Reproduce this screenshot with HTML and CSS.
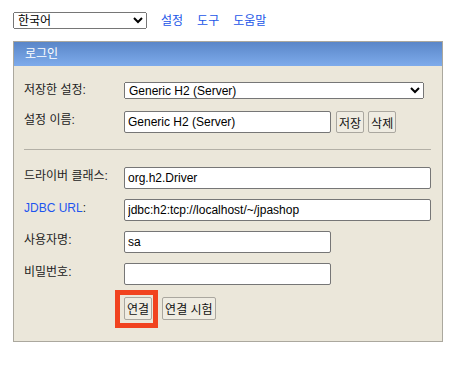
FILE: index.html
```html
<!DOCTYPE html>
<html lang="ko">
<head>
    <meta charset="UTF-8" />
    <title>H2 Console</title>
    <link rel="stylesheet" href="styles.css">
</head>
<body>
<div class="toolbar">
    <select class="lang">
        <option>한국어</option>
    </select>
    <a href="#" class="nav-link">설정</a>
    <a href="#" class="nav-link">도구</a>
    <a href="#" class="nav-link">도움말</a>
</div>

<div class="login">
    <div class="login-head">로그인</div>
    <div class="login-body">
        <!-- saved settings -->
        <div class="form-grid">
            <div class="label first">저장한 설정:</div>
            <div class="field">
                <select class="saved">
                    <option>Generic H2 (Server)</option>
                </select>
            </div>
            <div class="label">설정 이름:</div>
            <div class="field">
                <input class="short" type="text" value="Generic H2 (Server)">
                <button class="btn">저장</button>
                <button class="btn">삭제</button>
            </div>
        </div>

        <hr class="sep">

        <!-- connection -->
        <div class="form-grid">
            <div class="label">드라이버 클래스:</div>
            <div class="field"><input class="wide" type="text" value="org.h2.Driver"></div>
            <div class="label"><a href="#" class="help">JDBC URL</a>:</div>
            <div class="field"><input class="wide" type="text" value="jdbc:h2:tcp://localhost/~/jpashop"></div>
            <div class="label">사용자명:</div>
            <div class="field"><input class="short" type="text" value="sa"></div>
            <div class="label">비밀번호:</div>
            <div class="field"><input class="short" type="password"></div>
            <div></div>
            <div class="field actions">
                <span class="marked"><button class="btn">연결</button></span>
                <button class="btn">연결 시험</button>
            </div>
        </div>
    </div>
</div>
</body>
</html>
```

FILE: styles.css
```css
body {
    margin: 0;
    padding: 12px 13px;
    background: white;
    font-family: "Liberation Sans", "Noto Sans CJK KR", sans-serif;
    font-size: 12px;
    line-height: 16px;
    color: #222;
}

.toolbar {
    display: flex;
    align-items: center;
    height: 17px;
}

.lang {
    width: 134px;
    height: 17px;
    font-family: inherit;
    font-size: 12px;
    margin: 0 14px 0 0;
}

.nav-link {
    color: #1a56e8;
    text-decoration: none;
    margin-right: 14px;
}

.login {
    width: 428px;
    margin-top: 12px;
    border: 1px solid #aba89e;
    background: #ebe7da;
}

.login-head {
    height: 24px;
    line-height: 24px;
    padding-left: 11px;
    color: white;
    background: linear-gradient(#5a86c8, #7eabeb);
}

.login-body {
    padding: 16px 11px 21px 10px;
}

.form-grid {
    display: grid;
    grid-template-columns: 100px auto;
    row-gap: 10px;
}

.label {
    padding-top: 1px;
    white-space: nowrap;
}

.label.first {
    padding-top: 0;
}

.help {
    color: #1d55ef;
    text-decoration: none;
}

.field {
    display: flex;
    align-items: center;
}

.saved {
    width: 300px;
    height: 17px;
    margin: 0 0 2px 0;
    font-family: inherit;
    font-size: 12px;
}

input {
    box-sizing: border-box;
    height: 22px;
    margin: 0;
    padding: 1px 3px;
    font-family: inherit;
    font-size: 12px;
    border: 1px solid #767676;
    border-radius: 2px;
    background: white;
    color: #000;
}

.wide {
    width: 307px;
}

.short {
    width: 207px;
}

.btn {
    height: 22px;
    margin: 0 0 0 4px;
    padding: 0 2px;
    font-family: inherit;
    font-size: 12px;
    color: #111;
    background: #efece2;
    border: 1px solid #aaa79f;
    border-radius: 2px;
}

.short + .btn {
    margin-left: 5px;
}

.actions {
    margin-top: 2px;
}

.actions .btn {
    height: 23px;
    margin: 0;
}

.marked {
    position: relative;
    margin-right: 10px;
}

/* red highlight box around the connect button */
.marked::after {
    content: "";
    position: absolute;
    left: -9px;
    right: -6px;
    top: -7px;
    bottom: -8px;
    border: 5px solid #f1431f;
}

.sep {
    border: 0;
    border-top: 1px solid #b3b0a6;
    margin: 16px 0 17px 0;
}
```
